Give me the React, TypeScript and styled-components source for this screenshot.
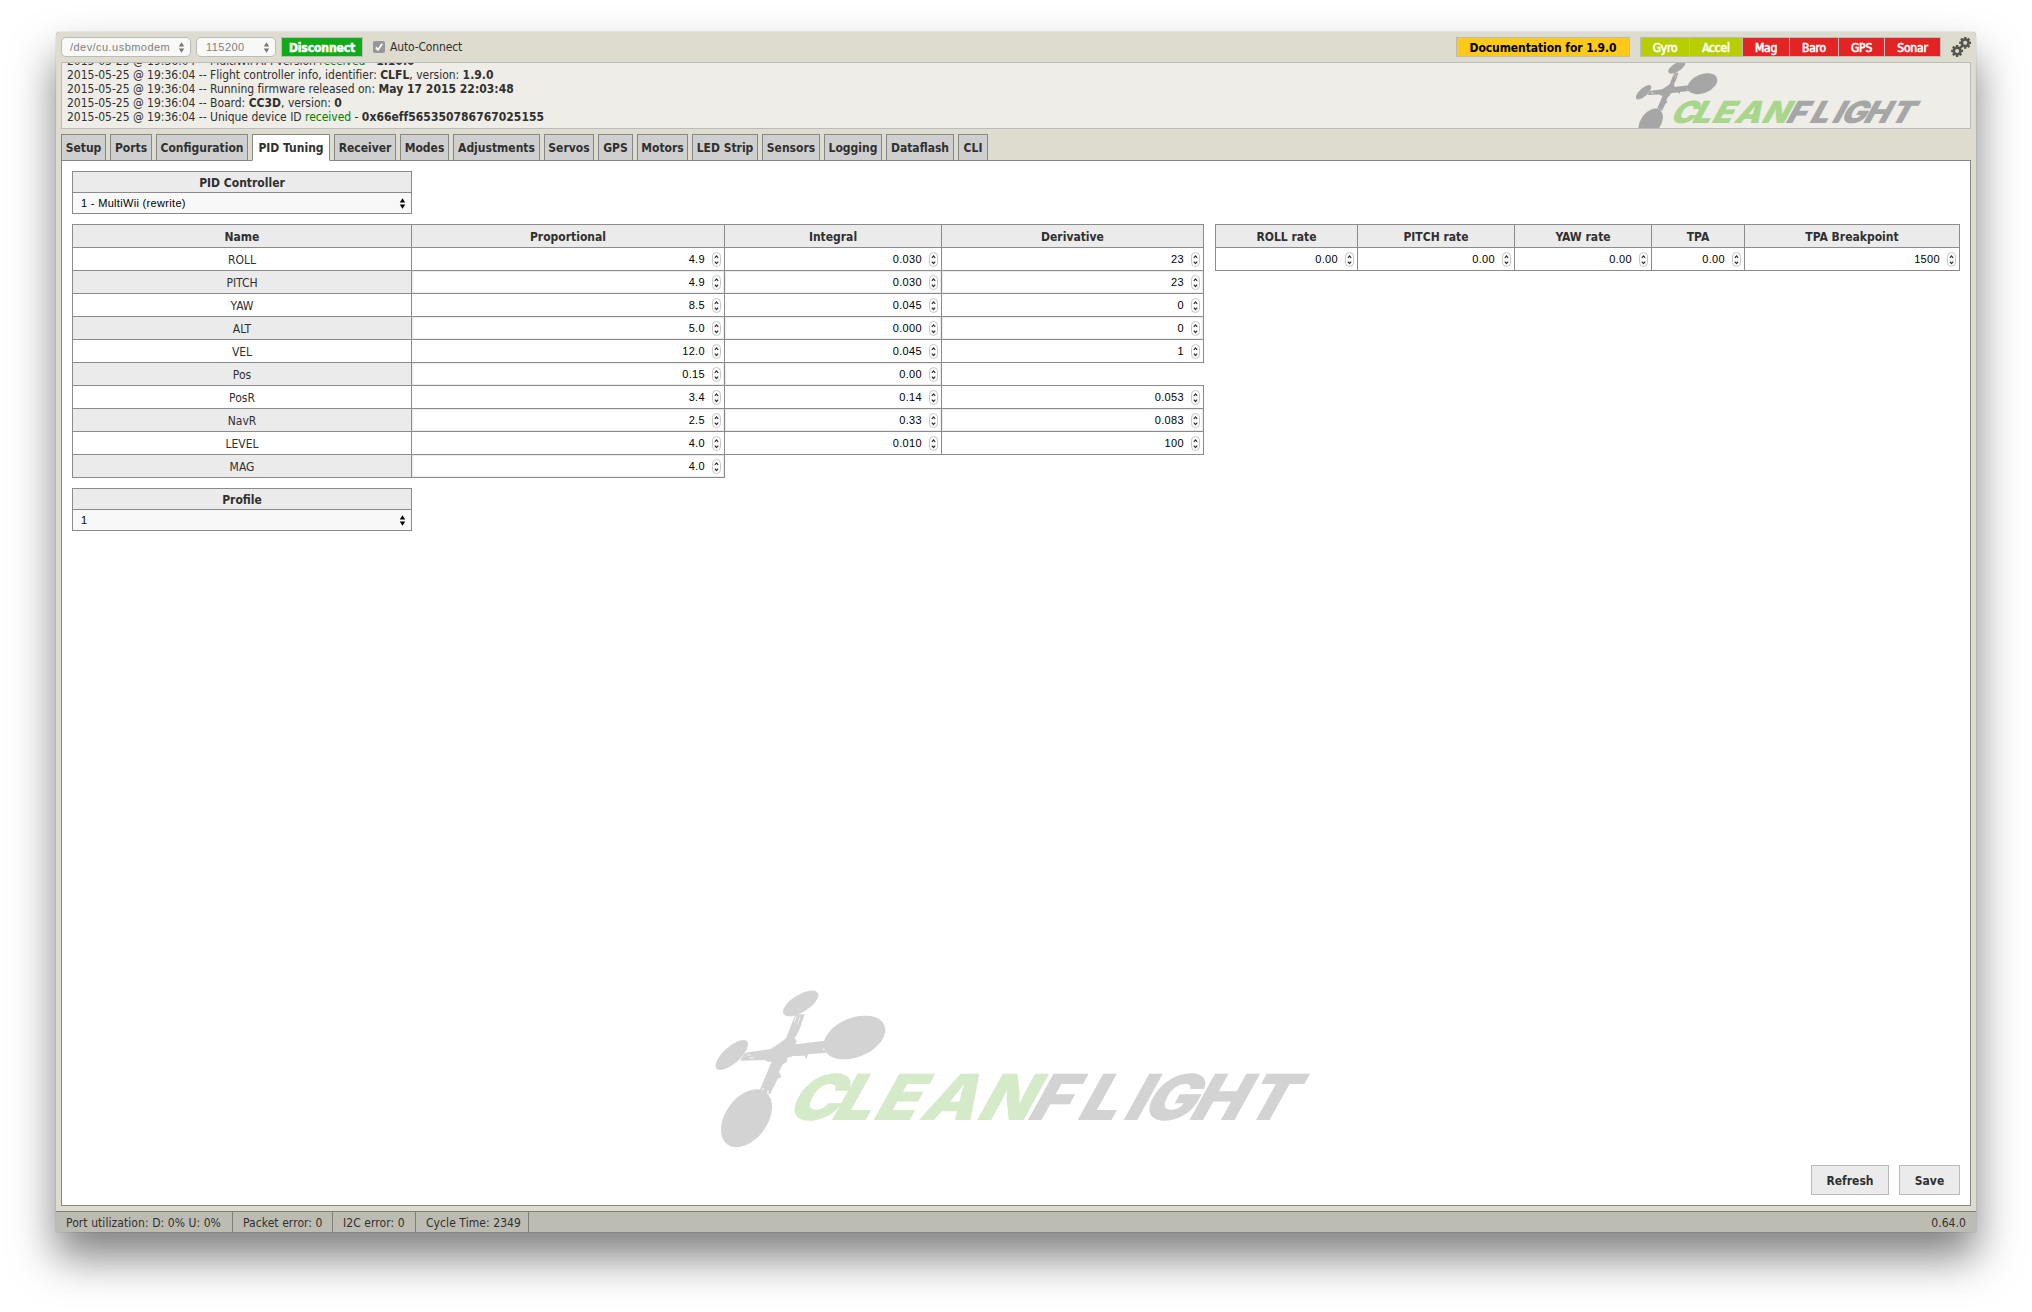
import React from "react";
import styled, { createGlobalStyle, css } from "styled-components";

const uiFont = `"DejaVu Sans Condensed", "DejaVu Sans", Tahoma, sans-serif`;
const fieldFont = `"Liberation Sans", Arial, Helvetica, sans-serif`;

const GlobalStyle = createGlobalStyle`
  * { box-sizing: border-box; }
  body {
    margin: 0;
    background: #fff;
    color: #303030;
    font-family: ${uiFont};
    font-stretch: condensed;
    font-size: 12px;
    overflow: hidden;
  }
`;

const Desktop = styled.div`
  width: 2032px;
  height: 1312px;
  padding: 32px 56px;
`;

const AppWindow = styled.div`
  display: flex;
  flex-direction: column;
  width: 1920px;
  height: 1200px;
  border-radius: 4px 4px 2px 2px;
  background: #dedccf;
  box-shadow: 0 0 1px rgba(0, 0, 0, 0.5), 0 25px 44px rgba(0, 0, 0, 0.5);
`;

const Toolbar = styled.header`
  display: flex;
  height: 30px;
  padding: 5px 5px 5px;
`;

const PortSelect = styled.div<{ $width: number }>`
  display: flex;
  align-items: center;
  justify-content: space-between;
  width: ${(p) => p.$width}px;
  height: 20px;
  margin-right: 5px;
  padding: 0 5px 0 8px;
  border: 1px solid #bbb;
  border-radius: 5px;
  background: #f8f8f6;
  color: #7f7f7f;
  font: 11px ${fieldFont};
  letter-spacing: 0.45px;
`;

const PortText = styled.span<{ $indent?: number }>`
  max-width: 100px;
  margin-left: ${(p) => p.$indent ?? 0}px;
  overflow: hidden;
  line-height: 16px;
  white-space: nowrap;
`;

const ConnectButton = styled.div`
  width: 82px;
  height: 20px;
  border: 1px solid #bbb;
  background: #11aa19;
  color: #fff;
  font-weight: bold;
  line-height: 20px;
  text-align: center;
  letter-spacing: -0.1px;
  -webkit-text-stroke: 0.5px #fff;
`;

const AutoConnect = styled.label`
  display: flex;
  align-items: center;
  gap: 5px;
  margin-left: 10px;
  letter-spacing: -0.15px;
  line-height: 22px;
`;

const Checkbox = styled.span`
  display: flex;
  width: 12px;
  height: 12px;
  border-radius: 2px;
  background: #97979b;
`;

const DocsButton = styled.div`
  width: 174px;
  height: 20px;
  margin: 0 10px 0 auto;
  border: 1px solid #bbb;
  background: #ffc91a;
  color: #000;
  font-weight: bold;
  line-height: 20px;
  text-align: center;
  letter-spacing: -0.08px;
`;

const SensorBar = styled.div`
  display: grid;
  grid-template-columns: 49px 53px 47px 49px 46px 55px;
  height: 20px;
  margin-right: 10px;
  border: 1px solid #bbb;
`;

const Sensor = styled.span<{ $on?: boolean }>`
  border-right: 1px solid #bbb;
  background: ${(p) => (p.$on ? "#b7cf02" : "#e32424")};
  color: #fff;
  line-height: 20px;
  height: 18px;
  text-align: center;
  letter-spacing: -0.2px;
  -webkit-text-stroke: 0.6px #fff;
  &:last-child {
    border-right: 0;
  }
`;

const LogBox = styled.section`
  display: flex;
  justify-content: space-between;
  align-items: flex-end;
  height: 67px;
  margin: 0 5px;
  padding-left: 5px;
  overflow: hidden;
  border: 1px solid #bbb;
  background: #eeede8;
`;

const LogLines = styled.div`
  padding-bottom: 4px;
  line-height: 14px;
  letter-spacing: -0.02px;
  white-space: nowrap;
  b {
    letter-spacing: 0.03px;
  }
`;

const Received = styled.span`
  color: green;
`;

const LogoSlot = styled.div`
  align-self: flex-start;
  height: 75px;
  margin: -2px 46px 0 0;
`;

const TabRow = styled.nav`
  display: flex;
  gap: 4px;
  height: 27px;
  margin: 5px 5px -1px;
`;

const Tab = styled.div<{ $width: number; $active?: boolean }>`
  width: ${(p) => p.$width}px;
  height: 27px;
  border: 1px solid #868686;
  border-bottom-color: ${(p) => (p.$active ? "#fff" : "#868686")};
  background: ${(p) => (p.$active ? "#fff" : "#cfcfcf")};
  z-index: ${(p) => (p.$active ? 1 : 0)};
  font-weight: bold;
  line-height: 27px;
  text-align: center;
  white-space: nowrap;
`;

const Content = styled.main`
  display: flex;
  flex-direction: column;
  flex: 1;
  margin: 0 5px 5px;
  padding: 10px;
  border: 1px solid #868686;
  background: #fff;
`;

const Tables = styled.div`
  display: flex;
  align-items: flex-start;
  justify-content: space-between;
  margin: 10px 0;
`;

const Picker = styled.div`
  width: 340px;
  border: 1px solid #8b8b8b;
`;

const PickerTitle = styled.div`
  height: 21px;
  border-bottom: 1px solid #8b8b8b;
  background: #ebebeb;
  font-weight: bold;
  line-height: 22px;
  text-align: center;
`;

const PickerField = styled.div`
  display: flex;
  align-items: center;
  justify-content: space-between;
  height: 20px;
  padding: 0 5px 0 8px;
  background: #f8f8f8;
  color: #000;
  font: 11px ${fieldFont};
  letter-spacing: 0.32px;
`;

const Grid = styled.table<{ $width: number }>`
  width: ${(p) => p.$width}px;
  border-collapse: collapse;
  table-layout: fixed;
`;

const cell = css`
  height: 23px;
  padding: 1px 0 0;
  border: 1px solid #8b8b8b;
`;

const HeadCell = styled.th<{ $width: number }>`
  ${cell}
  width: ${(p) => p.$width}px;
  background: #ebebeb;
`;

const NameCell = styled.td<{ $shade: boolean }>`
  ${cell}
  background: ${(p) => (p.$shade ? "#ebebeb" : "#fff")};
  text-align: center;
`;

const ValueCell = styled.td<{ $shade?: boolean }>`
  ${cell}
  padding: 1px;
  background: ${(p) => (p.$shade ? "#ebebeb" : "#fff")};
`;

const EmptyCell = styled.td`
  padding: 0;
`;

const NumberBox = styled.div`
  display: flex;
  align-items: center;
  justify-content: flex-end;
  gap: 7px;
  height: 20px;
  padding-right: 2px;
  background: #fff;
  color: #000;
  font: 11px ${fieldFont};
  letter-spacing: 0.35px;
`;

const Spinner = styled.span`
  display: flex;
  width: 9px;
  height: 15px;
  border: 1px solid #c6c6c6;
  border-radius: 5px;
  background: #fff;
`;

const Watermark = styled.div`
  display: flex;
  height: 157px;
  margin: auto 0 18px 644px;
`;

const Actions = styled.div`
  display: flex;
  justify-content: flex-end;
  gap: 10px;
`;

const ActionButton = styled.div<{ $width: number }>`
  width: ${(p) => p.$width}px;
  height: 30px;
  border: 1px solid #bbb;
  background: #ebebeb;
  font-weight: bold;
  line-height: 30px;
  text-align: center;
`;

const StatusBar = styled.footer`
  display: flex;
  height: 21px;
  border-top: 1px solid #7f7f79;
  border-radius: 0 0 2px 2px;
  background: #bdbcb2;
  line-height: 22px;
  letter-spacing: 0.07px;
`;

const StatusItem = styled.span<{ $width: number }>`
  width: ${(p) => p.$width}px;
  height: 20px;
  padding-left: 10px;
  border-right: 1px solid #7f7f79;
  white-space: nowrap;
`;

const Version = styled.span`
  margin-left: auto;
  padding-right: 10px;
`;

const Arrows = ({ color = "#000" }: { color?: string }) => (
  <svg width="7" height="11" viewBox="0 0 7 11" fill={color}>
    <path d="M3.5 .3 6.2 4.5H.8ZM3.5 10.7.8 6.5h5.4Z" />
  </svg>
);

const Stepper = () => (
  <Spinner>
    <svg width="7" height="13" viewBox="0 0 7 13" fill="none" stroke="#333" strokeWidth="1.2">
      <path d="M1.800 4.900 3.500 3 5.200 4.900M1.800 8.600 3.500 10.500 5.200 8.600" />
    </svg>
  </Spinner>
);

const gearPath = (cx: number, cy: number) => {
  const points: string[] = [];
  for (let i = 0; i < 8; i++) {
    [[-0.3, 4.5], [-0.2, 6.1], [0.2, 6.1], [0.3, 4.5]].forEach(([d, r]) => {
      const a = (i * Math.PI) / 4 + d;
      points.push(`${(cx + r * Math.cos(a)).toFixed(2)} ${(cy + r * Math.sin(a)).toFixed(2)}`);
    });
  }
  return `M${points.join("L")}ZM${cx - 2} ${cy}a2 2 0 1 0 4 0a2 2 0 1 0-4 0Z`;
};

const Gears = () => (
  <svg width="20" height="20" viewBox="0 0 20 20" fill="#57564f" fillRule="evenodd">
    <path d={gearPath(6.1, 13.9)} />
    <path d={gearPath(14.2, 5.8)} />
  </svg>
);

const Logo = ({ width, gray, green }: { width: number; gray: string; green: string }) => (
  <svg width={width} height={(width * 157) / 600} viewBox="0 0 600 157" overflow="visible">
    <g fill={gray}>
      <ellipse rx="20.2" ry="8.6" transform="translate(84.7 13.4) rotate(-32)" />
      <ellipse rx="32.3" ry="19.6" transform="translate(138.5 47.5) rotate(-22)" />
      <ellipse rx="20.4" ry="8.4" transform="translate(15.8 65) rotate(-42)" />
      <ellipse rx="32.5" ry="21" transform="translate(30.5 128.3) rotate(-54)" />
      <path
        transform="translate(-6 -5) scale(.33333)"
        d="M256 88 284 88 276 112 268 135 254 160 260 168 256 178 346 167 352 203 294 208 290 221 283 212 248 213 232 219 230 232 218 238 207 262 215 275 203 281 180 328 148 318 185 230 172 230 165 225 90 227 105 203 182 192 215 170 228 160Z"
      />
    </g>
    <g fill="#fff" fillOpacity=".75">
      <path d="M79.5 26l1.2.3-2 6-1 .2zM83.5 27l.8.3-2.3 7-.9.2zM31 64.5h4v1h-4zM33 67.5h5v1h-5zM46.5 98l1.5.5-1 2-1.3-.5zM51.5 100.500l1.500.5-.5 2.500-1.800-.5zM107 58.500h1.500v1.500H107z" />
    </g>
    <g
      transform="translate(0 129.700) skewX(-29) scale(1.08 1)"
      fontFamily="Inter, sans-serif"
      fontWeight="900"
      fontSize="63.500"
    >
      <text x="62.500 104.500 143 186.500 239" fill={green}>CLEAN</text>
      <text x="286 332 374.500 391 435.500 484.500" fill={gray}>FLIGHT</text>
    </g>
  </svg>
);

const tabs: [string, number][] = [
  ["Setup", 45],
  ["Ports", 42],
  ["Configuration", 92],
  ["PID Tuning", 78],
  ["Receiver", 62],
  ["Modes", 49],
  ["Adjustments", 87],
  ["Servos", 50],
  ["GPS", 35],
  ["Motors", 51],
  ["LED Strip", 66],
  ["Sensors", 58],
  ["Logging", 58],
  ["Dataflash", 68],
  ["CLI", 30],
];

const pidRows: string[][] = [
  ["ROLL", "4.9", "0.030", "23"],
  ["PITCH", "4.9", "0.030", "23"],
  ["YAW", "8.5", "0.045", "0"],
  ["ALT", "5.0", "0.000", "0"],
  ["VEL", "12.0", "0.045", "1"],
  ["Pos", "0.15", "0.00", ""],
  ["PosR", "3.4", "0.14", "0.053"],
  ["NavR", "2.5", "0.33", "0.083"],
  ["LEVEL", "4.0", "0.010", "100"],
  ["MAG", "4.0", "", ""],
];

const rates: [string, number, string][] = [
  ["ROLL rate", 142, "0.00"],
  ["PITCH rate", 157, "0.00"],
  ["YAW rate", 137, "0.00"],
  ["TPA", 93, "0.00"],
  ["TPA Breakpoint", 215, "1500"],
];

const NumberField = ({ value }: { value: string }) => (
  <NumberBox>
    <span>{value}</span>
    <Stepper />
  </NumberBox>
);

const stamp = "2015-05-25 @ 19:36:04 -- ";

export default function App() {
  return (
    <>
      <GlobalStyle />
      <Desktop>
        <AppWindow>
          <Toolbar>
            <PortSelect $width={130}>
              <PortText>/dev/cu.usbmodem</PortText>
              <Arrows color="#777" />
            </PortSelect>
            <PortSelect $width={80}>
              <PortText $indent={1}>115200</PortText>
              <Arrows color="#777" />
            </PortSelect>
            <ConnectButton>Disconnect</ConnectButton>
            <AutoConnect>
              <Checkbox>
                <svg width="12" height="12" viewBox="0 0 12 12" fill="none" stroke="#fff" strokeWidth="1.8">
                  <path d="M2.800 6.300 5 8.700 9.200 2.800" />
                </svg>
              </Checkbox>
              Auto-Connect
            </AutoConnect>
            <DocsButton>Documentation for 1.9.0</DocsButton>
            <SensorBar>
              <Sensor $on>Gyro</Sensor>
              <Sensor $on>Accel</Sensor>
              <Sensor>Mag</Sensor>
              <Sensor>Baro</Sensor>
              <Sensor>GPS</Sensor>
              <Sensor>Sonar</Sensor>
            </SensorBar>
            <Gears />
          </Toolbar>

          <LogBox>
            <LogLines>
              <div>{stamp}MultiWii API version <Received>received</Received> - <b>1.10.0</b></div>
              <div>{stamp}Flight controller info, identifier: <b>CLFL</b>, version: <b>1.9.0</b></div>
              <div>{stamp}Running firmware released on: <b>May 17 2015 22:03:48</b></div>
              <div>{stamp}Board: <b>CC3D</b>, version: <b>0</b></div>
              <div>{stamp}Unique device ID <Received>received</Received> - <b>0x66eff565350786767025155</b></div>
            </LogLines>
            <LogoSlot>
              <Logo width={288} gray="#a6a6a6" green="#a8d68b" />
            </LogoSlot>
          </LogBox>

          <TabRow>
            {tabs.map(([label, width]) => (
              <Tab key={label} $width={width} $active={label === "PID Tuning"}>
                {label}
              </Tab>
            ))}
          </TabRow>

          <Content>
            <Picker>
              <PickerTitle>PID Controller</PickerTitle>
              <PickerField>
                1 - MultiWii (rewrite)
                <Arrows />
              </PickerField>
            </Picker>

            <Tables>
              <Grid $width={1132}>
                <thead>
                  <tr>
                    <HeadCell $width={339}>Name</HeadCell>
                    <HeadCell $width={313}>Proportional</HeadCell>
                    <HeadCell $width={217}>Integral</HeadCell>
                    <HeadCell $width={262}>Derivative</HeadCell>
                  </tr>
                </thead>
                <tbody>
                  {pidRows.map(([name, ...values], row) => (
                    <tr key={name}>
                      <NameCell $shade={row % 2 === 1}>{name}</NameCell>
                      {values.map((value, i) =>
                        value ? (
                          <ValueCell key={i} $shade={row % 2 === 1}>
                            <NumberField value={value} />
                          </ValueCell>
                        ) : (
                          <EmptyCell key={i} />
                        )
                      )}
                    </tr>
                  ))}
                </tbody>
              </Grid>
              <Grid $width={745}>
                <thead>
                  <tr>
                    {rates.map(([label, width]) => (
                      <HeadCell key={label} $width={width}>{label}</HeadCell>
                    ))}
                  </tr>
                </thead>
                <tbody>
                  <tr>
                    {rates.map(([label, , value]) => (
                      <ValueCell key={label}>
                        <NumberField value={value} />
                      </ValueCell>
                    ))}
                  </tr>
                </tbody>
              </Grid>
            </Tables>

            <Picker>
              <PickerTitle>Profile</PickerTitle>
              <PickerField>
                1
                <Arrows />
              </PickerField>
            </Picker>

            <Watermark>
              <Logo width={600} gray="#d3d3d3" green="#d5eac8" />
            </Watermark>
            <Actions>
              <ActionButton $width={78}>Refresh</ActionButton>
              <ActionButton $width={61}>Save</ActionButton>
            </Actions>
          </Content>

          <StatusBar>
            <StatusItem $width={177}>Port utilization: D: 0% U: 0%</StatusItem>
            <StatusItem $width={100}>Packet error: 0</StatusItem>
            <StatusItem $width={83}>I2C error: 0</StatusItem>
            <StatusItem $width={113}>Cycle Time: 2349</StatusItem>
            <Version>0.64.0</Version>
          </StatusBar>
        </AppWindow>
      </Desktop>
    </>
  );
}
